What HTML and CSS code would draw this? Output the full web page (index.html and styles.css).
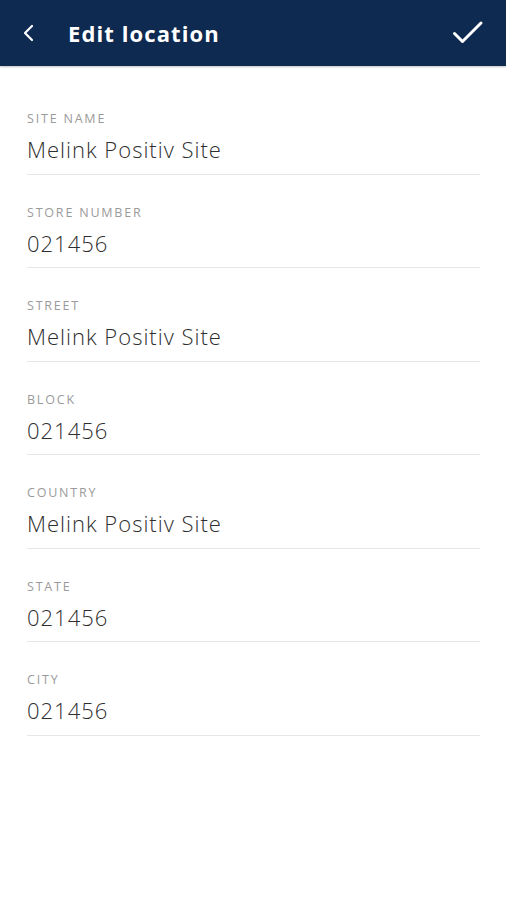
FILE: index.html
```html
<!DOCTYPE html>
<html lang="en">
<head>
    <meta charset="UTF-8">
    <meta name="viewport" content="width=device-width, initial-scale=1.0">
    <title>Edit location</title>
    <link rel="stylesheet" href="styles.css">
</head>
<body>
    <header class="topbar">
        <button class="icon-btn back" aria-label="Back">
            <svg width="14" height="18" viewBox="0 0 14 18"><path d="M10 2 L3 9 L10 16" fill="none" stroke="#fff" stroke-width="2.2" stroke-linecap="round" stroke-linejoin="round"/></svg>
        </button>
        <h1 class="title">Edit location</h1>
        <button class="icon-btn save" aria-label="Save">
            <svg width="32" height="26" viewBox="0 0 32 26"><path d="M2.5 13.5 L10.5 21.5 L29 3" fill="none" stroke="#fff" stroke-width="3" stroke-linecap="round" stroke-linejoin="round"/></svg>
        </button>
    </header>

    <main class="form">
        <div class="field">
            <div class="label">SITE NAME</div>
            <div class="value">Melink Positiv Site</div>
        </div>
        <div class="field">
            <div class="label">STORE NUMBER</div>
            <div class="value">021456</div>
        </div>
        <div class="field">
            <div class="label">STREET</div>
            <div class="value">Melink Positiv Site</div>
        </div>
        <div class="field">
            <div class="label">BLOCK</div>
            <div class="value">021456</div>
        </div>
        <div class="field">
            <div class="label">COUNTRY</div>
            <div class="value">Melink Positiv Site</div>
        </div>
        <div class="field">
            <div class="label">STATE</div>
            <div class="value">021456</div>
        </div>
        <div class="field">
            <div class="label">CITY</div>
            <div class="value">021456</div>
        </div>
    </main>
</body>
</html>
```

FILE: styles.css
```css
body {
    margin: 0;
    font-family: "Open Sans", "Noto Sans", sans-serif;
    background: #fff;
    color: #333;
}
.topbar {
    height: 66px;
    background: #0f2a50;
    display: flex;
    align-items: center;
    padding: 0 22px 0 22px;
    box-shadow: 0 1px 2px rgba(0,0,0,0.25);
}
.icon-btn {
    background: none;
    border: none;
    padding: 0;
    display: flex;
    align-items: center;
    cursor: pointer;
}
.back {
    margin-right: 32px;
}
.title {
    flex: 1;
    margin: 0;
    color: #fff;
    font-size: 22px;
    font-weight: 700;
    letter-spacing: 1.1px;
}
.form {
    padding: 15px 26px 0 27px;
}
.field {
    padding: 30px 0 9.5px;
    border-bottom: 1px solid #e6e6e6;
}
.label {
    font-size: 12.5px;
    line-height: 16px;
    color: #9a9a9a;
    letter-spacing: 1.8px;
}
.value {
    margin-top: 7px;
    font-size: 22px;
    font-weight: 300;
    line-height: 30px;
    color: #2e2e2e;
    letter-spacing: 1px;
}
```
